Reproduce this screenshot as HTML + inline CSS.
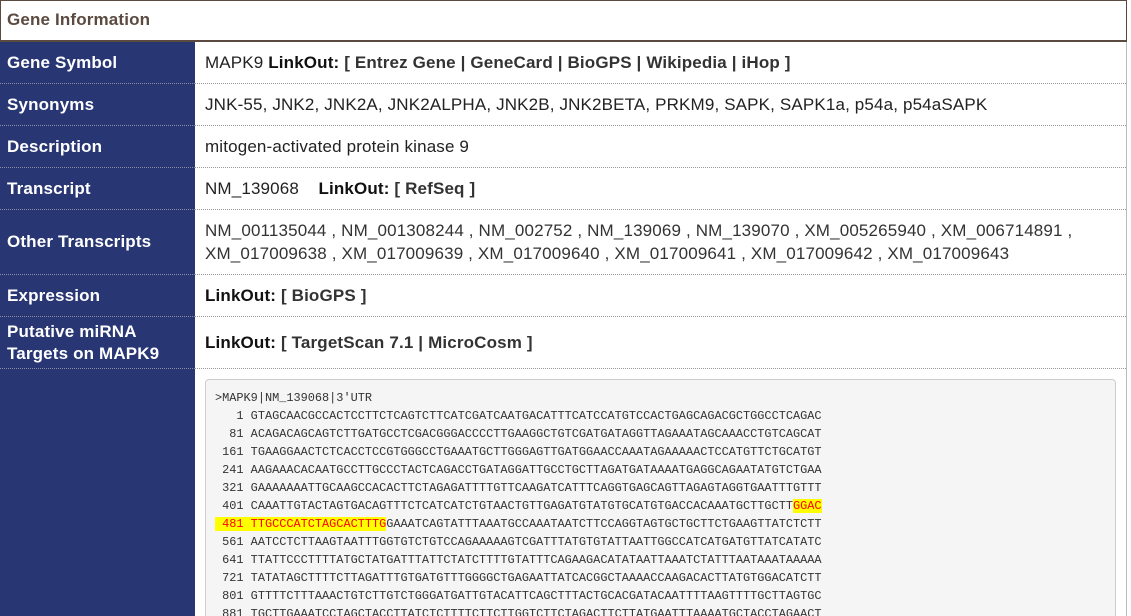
<!DOCTYPE html>
<html><head><meta charset="utf-8"><style>
*{margin:0;padding:0;box-sizing:border-box}
html,body{width:1131px;height:616px;overflow:hidden}
body{background:#fff;font-family:"Liberation Sans",Arial,sans-serif;position:relative}
.hdr{position:absolute;left:0;top:0;width:1127px;height:42px;border:1px solid #5b4a3f;border-bottom:2px solid #5b4a3f;color:#5b4a3f;font-weight:bold;font-size:17px;letter-spacing:.15px;padding:9px 6px}
.lab{position:absolute;left:0;width:195px;background:#283673;color:#fff;font-weight:bold;font-size:17px;letter-spacing:.15px;padding-left:7px;display:flex;align-items:center;border-bottom:1px dotted #8a8fa8}
.val{position:absolute;left:195px;width:931px;font-size:17px;letter-spacing:.15px;color:#222;padding-left:10px;display:flex;align-items:center;border-bottom:1px dotted #999;line-height:23px}
.val b{color:#111}
.l{color:#333;font-weight:bold}
.rb{position:absolute;left:1126px;top:42px;width:1px;height:574px;background:#bbb}
pre{position:absolute;left:205px;top:379px;width:911px;height:250px;background:#f5f5f5;border:1px solid #ccc;border-radius:4px;font-family:"Liberation Mono","DejaVu Sans Mono",monospace;font-size:11.9px;line-height:18px;color:#333;padding:9px 9px;overflow:hidden}
.h{background:#ff0;color:#f00}
</style></head><body>
<div class="hdr">Gene Information</div>
<div class="lab" style="top:42px;height:42px">Gene Symbol</div>
<div class="val" style="top:42px;height:42px">MAPK9&nbsp;<b>LinkOut:</b>&nbsp;<span class="l">[ Entrez Gene | GeneCard | BioGPS | Wikipedia | iHop ]</span></div>
<div class="lab" style="top:84px;height:42px">Synonyms</div>
<div class="val" style="top:84px;height:42px">JNK-55, JNK2, JNK2A, JNK2ALPHA, JNK2B, JNK2BETA, PRKM9, SAPK, SAPK1a, p54a, p54aSAPK</div>
<div class="lab" style="top:126px;height:42px">Description</div>
<div class="val" style="top:126px;height:42px">mitogen-activated protein kinase 9</div>
<div class="lab" style="top:168px;height:42px">Transcript</div>
<div class="val" style="top:168px;height:42px">NM_139068&nbsp;&nbsp;&nbsp;&nbsp;<b>LinkOut:</b>&nbsp;<span class="l">[ RefSeq ]</span></div>
<div class="lab" style="top:210px;height:65px">Other Transcripts</div>
<div class="val" style="top:210px;height:65px;color:#333">NM_001135044 , NM_001308244 , NM_002752 , NM_139069 , NM_139070 , XM_005265940 , XM_006714891 ,<br>XM_017009638 , XM_017009639 , XM_017009640 , XM_017009641 , XM_017009642 , XM_017009643</div>
<div class="lab" style="top:275px;height:42px">Expression</div>
<div class="val" style="top:275px;height:42px"><b>LinkOut:</b>&nbsp;<span class="l">[ BioGPS ]</span></div>
<div class="lab" style="top:317px;height:52px;line-height:22px">Putative miRNA<br>Targets on MAPK9</div>
<div class="val" style="top:317px;height:52px"><b>LinkOut:</b>&nbsp;<span class="l">[ TargetScan 7.1 | MicroCosm ]</span></div>
<div class="lab" style="top:369px;height:247px;border:none"></div>
<div class="rb"></div>
<pre>&gt;MAPK9|NM_139068|3'UTR
   1 GTAGCAACGCCACTCCTTCTCAGTCTTCATCGATCAATGACATTTCATCCATGTCCACTGAGCAGACGCTGGCCTCAGAC
  81 ACAGACAGCAGTCTTGATGCCTCGACGGGACCCCTTGAAGGCTGTCGATGATAGGTTAGAAATAGCAAACCTGTCAGCAT
 161 TGAAGGAACTCTCACCTCCGTGGGCCTGAAATGCTTGGGAGTTGATGGAACCAAATAGAAAAACTCCATGTTCTGCATGT
 241 AAGAAACACAATGCCTTGCCCTACTCAGACCTGATAGGATTGCCTGCTTAGATGATAAAATGAGGCAGAATATGTCTGAA
 321 GAAAAAAATTGCAAGCCACACTTCTAGAGATTTTGTTCAAGATCATTTCAGGTGAGCAGTTAGAGTAGGTGAATTTGTTT
 401 CAAATTGTACTAGTGACAGTTTCTCATCATCTGTAACTGTTGAGATGTATGTGCATGTGACCACAAATGCTTGCTT<span class="h">GGAC</span>
<span class="h"> 481 TTGCCCATCTAGCACTTTG</span>GAAATCAGTATTTAAATGCCAAATAATCTTCCAGGTAGTGCTGCTTCTGAAGTTATCTCTT
 561 AATCCTCTTAAGTAATTTGGTGTCTGTCCAGAAAAAGTCGATTTATGTGTATTAATTGGCCATCATGATGTTATCATATC
 641 TTATTCCCTTTTATGCTATGATTTATTCTATCTTTTGTATTTCAGAAGACATATAATTAAATCTATTTAATAAATAAAAA
 721 TATATAGCTTTTCTTAGATTTGTGATGTTTGGGGCTGAGAATTATCACGGCTAAAACCAAGACACTTATGTGGACATCTT
 801 GTTTTCTTTAAACTGTCTTGTCTGGGATGATTGTACATTCAGCTTTACTGCACGATACAATTTTAAGTTTTGCTTAGTGC
 881 TGCTTGAAATCCTAGCTACCTTATCTCTTTTCTTCTTGGTCTTCTAGACTTCTTATGAATTTAAAATGCTACCTAGAACT</pre>
</body></html>
